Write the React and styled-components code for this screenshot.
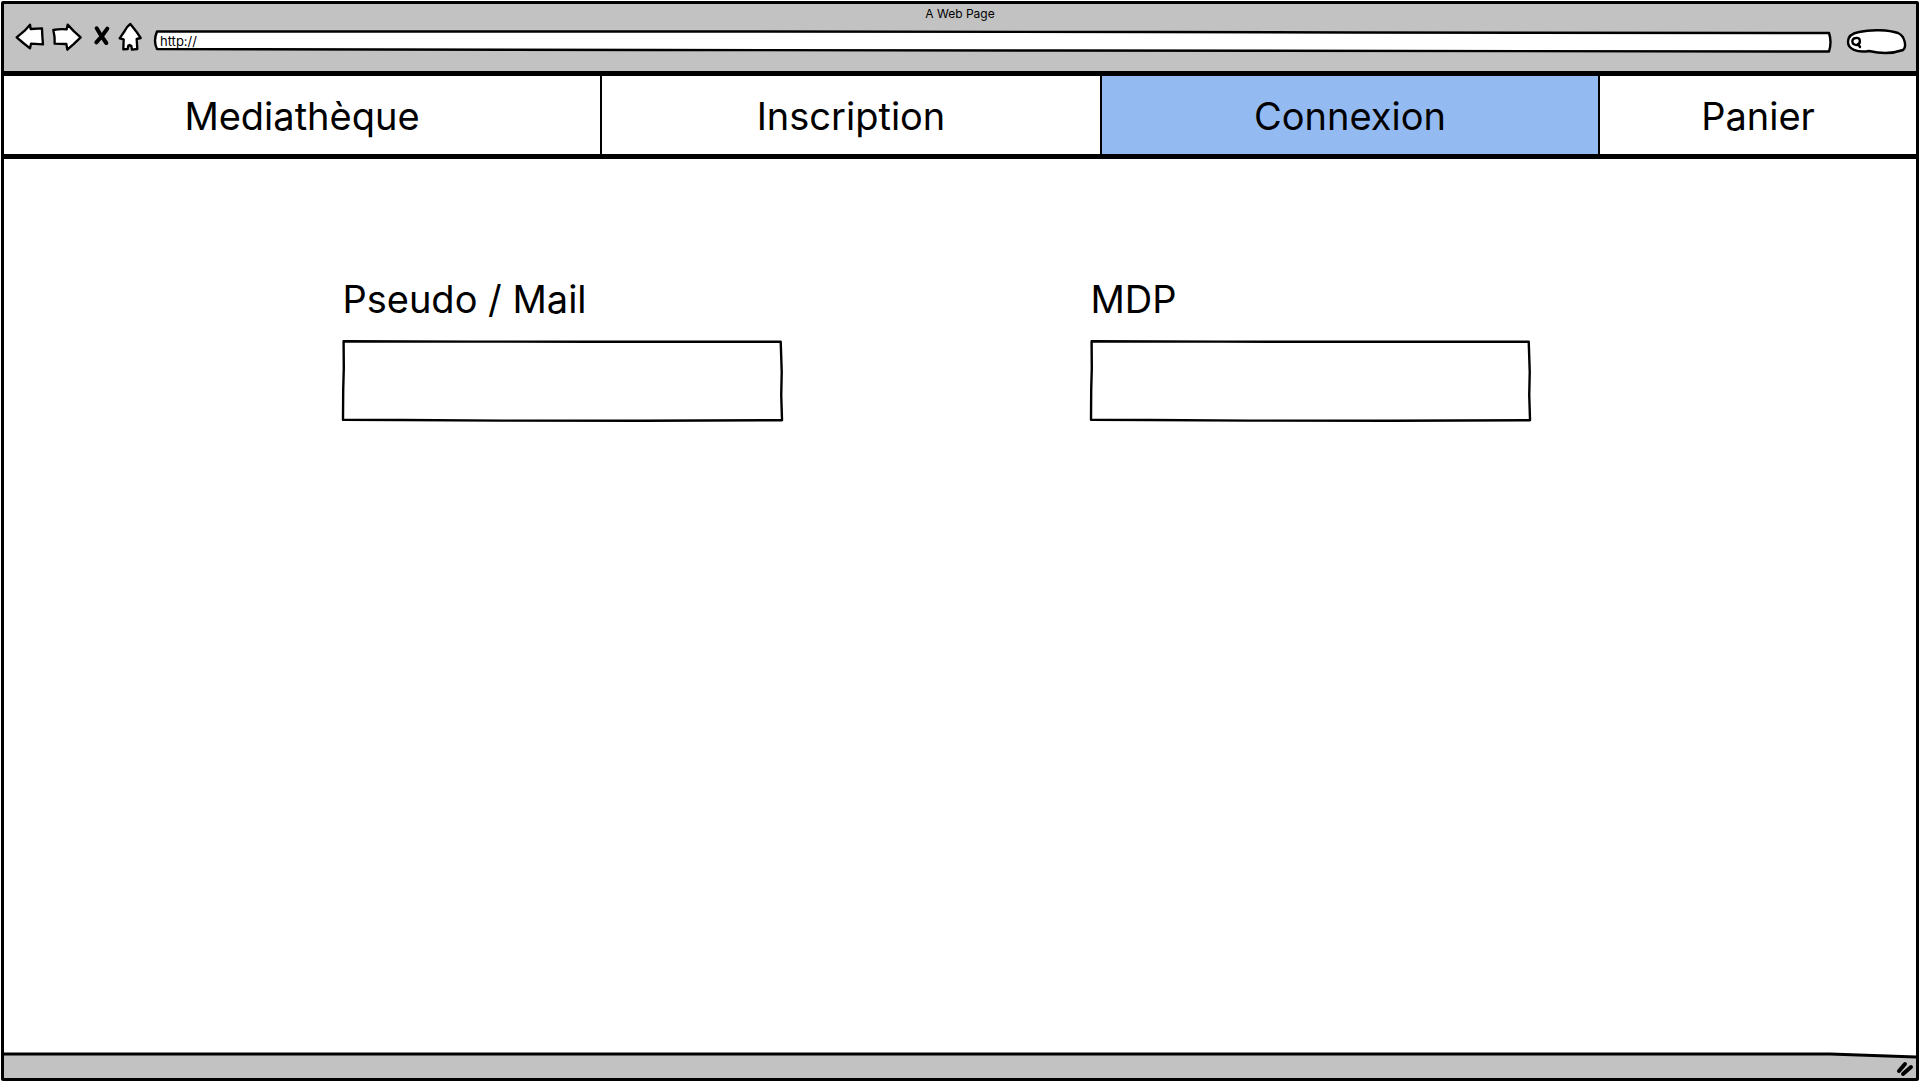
import React, { useState } from "react";
import styled, { createGlobalStyle } from "styled-components";

const ink = "#000";
const chrome = "#c2c2c2";
const sky = "#94baf2";

const GlobalStyle = createGlobalStyle`
  *, *::before, *::after { box-sizing: border-box; }
  body { margin: 0; background: #fff; }
`;

const Page = styled.div`
  min-height: 100vh;
  padding: 1px;
  display: flex;
  font-family: Inter, "Open Sans", sans-serif;
  color: ${ink};
`;

const BrowserWindow = styled.div`
  flex: 1;
  display: flex;
  flex-direction: column;
  border: 3px solid ${ink};
  border-radius: 2px;
`;

const TitleBar = styled.header`
  height: 72px;
  background: ${chrome};
  border-bottom: 5px solid ${ink};
`;

const WindowTitle = styled.div`
  font-size: 12px;
  line-height: 20px;
  text-align: center;
`;

const Toolbar = styled.div`
  display: flex;
  align-items: flex-end;
  gap: 6px;
  padding: 0 8px 0 11px;
`;

const ToolButton = styled.button`
  display: block;
  padding: 0;
  border: 0;
  background: none;
  cursor: pointer;
`;

const Glyph = styled.svg`
  display: block;
  height: 30px;
  fill: #fff;
  stroke: ${ink};
  stroke-width: ${(p) => (p.$heavy ? 12 : 7)};
  stroke-linejoin: round;
  stroke-linecap: round;
  overflow: visible;
`;

const Sketched = styled.div`
  position: relative;
  display: flex;
  flex: ${(p) => (p.$grow ? 1 : "none")};
  width: ${(p) => p.$width || "auto"};
  height: ${(p) => p.$height};
`;

const Outline = styled.svg`
  position: absolute;
  inset: 0;
  width: 100%;
  height: 100%;
  overflow: visible;
  fill: #fff;
  stroke: ${ink};
  stroke-width: 2.4;
  stroke-linejoin: round;
  stroke-linecap: round;
  pointer-events: none;

  path { vector-effect: non-scaling-stroke; }
`;

const TextBox = styled.input`
  position: relative;
  flex: 1;
  min-width: 0;
  padding: ${(p) => p.$pad};
  border: 0;
  outline: 0;
  background: transparent;
  font: inherit;
  font-size: ${(p) => p.$size};
  color: inherit;
`;

const Nav = styled.nav`
  display: grid;
  grid-template-columns: 598fr 500fr 498fr 316fr;
  border-bottom: 5px solid ${ink};
`;

const NavLink = styled.a`
  padding: 18px 0 16px;
  border-right: 2px solid ${ink};
  background: ${(p) => (p.$active ? sky : "#fff")};
  font-size: 38px;
  line-height: 44px;
  text-align: center;
  text-decoration: none;
  color: inherit;

  &:last-child { border-right: 0; }
`;

const LoginForm = styled.form`
  flex: 1;
  display: grid;
  grid-template-columns: repeat(2, minmax(0, 1fr));
  align-content: start;
  column-gap: 25.8%;
  padding: 118px 20.1% 0 17.7%;
`;

const Field = styled.div`
  display: flex;
  flex-direction: column;
  gap: 19px;
`;

const Label = styled.label`
  font-size: 38px;
  line-height: 44px;
`;

const StatusBar = styled.footer`
  position: relative;
  display: flex;
  justify-content: flex-end;
  height: 25px;
`;

const Grip = styled.svg`
  position: relative;
  width: 20px;
  height: 25px;
  stroke: ${ink};
  stroke-width: 4px;
  stroke-linecap: round;
  fill: none;
`;

function Tool({ label, box, heavy, children }) {
  const width = Number(box.split(" ")[2]) / 3;
  return (
    <ToolButton type="button" aria-label={label}>
      <Glyph viewBox={box} width={width} $heavy={heavy}>{children}</Glyph>
    </ToolButton>
  );
}

function SketchField({ id, label, type }) {
  return (
    <Field>
      <Label htmlFor={id}>{label}</Label>
      <Sketched $height="82px">
        <Outline viewBox="0 0 441 82" preserveAspectRatio="none">
          <path d="M1.6 1.2 L130 1.6 L250 1.8 L438.5 1.7 L439.5 32 L439 55 L439.8 80.2 L300 80.8 L160 80.6 L60 80 L1 79.8 L1.2 50 L1.8 28 Z" />
        </Outline>
        <TextBox id={id} type={type} $size="32px" $pad="0 16px" />
      </Sketched>
    </Field>
  );
}

const links = ["Mediathèque", "Inscription", "Connexion", "Panier"];

export default function App() {
  const [active, setActive] = useState("Connexion");

  return (
    <>
      <GlobalStyle />
      <Page>
        <BrowserWindow>
          <TitleBar>
            <WindowTitle>A Web Page</WindowTitle>
            <Toolbar>
              <Tool label="Back" box="45 72 90 90">
                <path d="M50 112 L74 92 L90 74 L92 87 L126 85 L127 108 L129 133 L93 131 L90 145 L70 129 Z" />
              </Tool>
              <Tool label="Forward" box="153 72 108 90">
                <path d="M160 90 Q180 86 200 88 L203 74 L222 94 L242 112 L220 133 L202 149 L199 132 L164 131 Q165 110 160 90 Z" />
              </Tool>
              <Tool label="Stop" box="279 72 54 90" heavy>
                <path d="M290 85 L304 108 L319 129 M322 86 L306 108 L289 127" />
              </Tool>
              <Tool label="Home" box="351 72 90 90">
                <path d="M391 72 Q380 80 374 93 L359 115 L371 118 L370 148 L383 147 L385 137 L389 135 L394 138 L396 149 L412 147 L410 117 L422 114 L410 96 Z" />
              </Tool>
              <Sketched $grow $height="24px">
                <Outline viewBox="0 0 1679 24" preserveAspectRatio="none">
                  <path d="M4 1.5 L600 1.5 L1000 2 L1200 2.5 L1676 3 Q1679 12 1676 21.5 L900 20.5 L500 20 L4 19 Q0 11 4 1.5 Z" />
                </Outline>
                <TextBox aria-label="Address" defaultValue="http://" $size="13px" $pad="0 7px 3px" />
              </Sketched>
              <Sketched $width="70px" $height="26px">
                <Outline viewBox="0 0 70 26" preserveAspectRatio="none">
                  <path d="M21 4 C34 1 51 2 60 5 C67 8 69 19 65 22 C54 26 40 25 31 23 C19 25 10 21 10 14 C10 8 15 5 21 4 Z" />
                  <path d="M18 10 C23 9 23 16 19 17 C13 17 13 10 18 10 Z M20 16 L22 19" />
                </Outline>
                <TextBox aria-label="Search" $size="13px" $pad="0 8px 0 26px" />
              </Sketched>
            </Toolbar>
          </TitleBar>

          <Nav>
            {links.map((name) => (
              <NavLink
                key={name}
                href="#"
                $active={name === active}
                aria-current={name === active ? "page" : undefined}
                onClick={() => setActive(name)}
              >
                {name}
              </NavLink>
            ))}
          </Nav>

          <LoginForm>
            <SketchField id="pseudo" label="Pseudo / Mail" type="text" />
            <SketchField id="mdp" label="MDP" type="password" />
          </LoginForm>

          <StatusBar>
            <Outline viewBox="0 0 1912 25" preserveAspectRatio="none">
              <path d="M0 1 L1826 1 L1912 4 L1912 25 L0 25 Z" fill={chrome} stroke="none" />
              <path d="M0 1 L1826 1 L1912 4" fill="none" strokeWidth="3" />
            </Outline>
            <Grip viewBox="0 0 20 25" aria-hidden="true">
              <path d="M3 18 L9 11" />
              <path d="M7 21 L15 14" />
            </Grip>
          </StatusBar>
        </BrowserWindow>
      </Page>
    </>
  );
}
